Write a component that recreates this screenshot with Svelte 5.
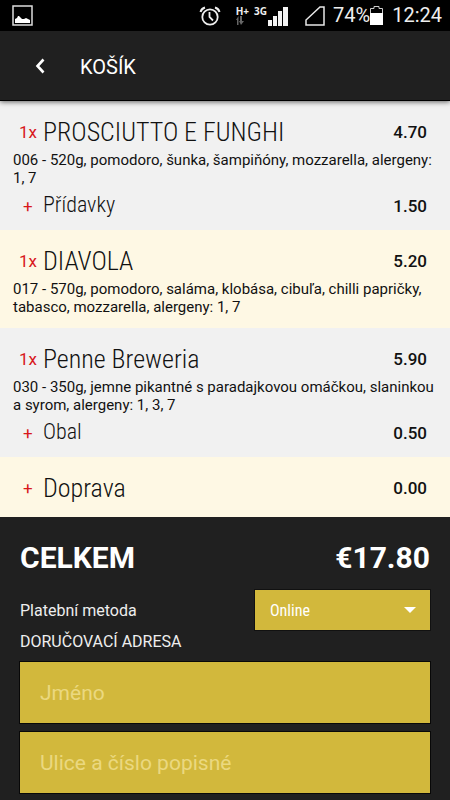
<script lang="ts">
    interface Extra {
        name: string;
        price: string;
    }

    interface Item {
        name: string;
        price: string;
        count?: number;
        description?: string;
        extras?: Extra[];
    }

    const items: Item[] = [
        {
            name: "PROSCIUTTO E FUNGHI",
            price: "4.70",
            count: 1,
            description:
                "006 - 520g, pomodoro, šunka, šampiňóny, mozzarella, alergeny: 1, 7",
            extras: [{ name: "Přídavky", price: "1.50" }],
        },
        {
            name: "DIAVOLA",
            price: "5.20",
            count: 1,
            description:
                "017 - 570g, pomodoro, saláma, klobása, cibuľa, chilli papričky, tabasco, mozzarella, alergeny: 1, 7",
        },
        {
            name: "Penne Breweria",
            price: "5.90",
            count: 1,
            description:
                "030 - 350g, jemne pikantné s paradajkovou omáčkou, slaninkou a syrom, alergeny: 1, 3, 7",
            extras: [{ name: "Obal", price: "0.50" }],
        },
        { name: "Doprava", price: "0.00" },
    ];

    let payment = $state("online");
    let fullName = $state("");
    let street = $state("");
</script>

<div class="screen">
    <div class="status">
        <svg class="picture" width="22" height="22" viewBox="0 0 22 22">
            <rect x="1" y="1" width="19" height="19" fill="none" stroke="#ddd" stroke-width="1.5" />
            <path d="M3 18v-4l2-1 1-2h1l2 2 1 1h2l2-1 2 1 2 1v3z" fill="#fff" />
        </svg>
        <svg class="alarm" width="22" height="22" viewBox="0 0 22 22" fill="none" stroke="#eee" stroke-width="1.8">
            <circle cx="11" cy="12" r="7.700" />
            <path d="M10.500 7v5l3.500 3.500" />
            <path d="M1.500 7q1-3.500 4.500-4.500M20.500 7q-1-3.500-4.500-4.500" stroke-width="2" />
        </svg>
        <div class="network">
            <span>H+</span>
            <svg width="8" height="9" viewBox="0 0 8 9" fill="#666">
                <path d="M0 4l2.500-4v9h-1.500V4zM4 0h2v5h2L5 9 3 5h1z" />
            </svg>
        </div>
        <span class="generation">3G</span>
        <svg class="bars" width="20" height="20" viewBox="0 0 20 20" fill="#f4f4f4">
            <path d="M0 14h4v6H0zM5 10h4v10H5zM10 5h4v15h-4zM15 1h5v19h-5z" />
        </svg>
        <svg class="signal" width="20" height="20" viewBox="0 0 20 20">
            <path d="M1 19v-5L15 1h4v18z" fill="none" stroke="#e8e8e8" stroke-width="1.5" />
        </svg>
        <span class="clock">74%</span>
        <svg width="13" height="19" viewBox="0 0 13 19">
            <path d="M.5 18.500v-16h3.500v-2h5v2h3.500v16z" fill="none" stroke="#ccc" />
            <path d="M0 7h13v12H0z" fill="#fff" />
        </svg>
        <span class="clock time">12:24</span>
    </div>

    <header>
        <button class="back" aria-label="Zpět">
            <svg width="12" height="16" viewBox="0 0 12 16">
                <path d="M9.500 1.500L3.500 8l6 6.500" fill="none" stroke="#fff" stroke-width="2.600" />
            </svg>
        </button>
        <h1>KOŠÍK</h1>
    </header>

    <ul class="items">
        {#each items as item}
            <li class="item">
                <div class="row">
                    {#if item.count}
                        <span class="count">{item.count}x</span>
                    {:else}
                        <span class="count plus">+</span>
                    {/if}
                    <span class="name">{item.name}</span>
                    <span class="price">{item.price}</span>
                </div>
                {#if item.description}
                    <p>{item.description}</p>
                {/if}
                {#each item.extras ?? [] as extra}
                    <div class="row extra">
                        <span class="count plus">+</span>
                        <span class="name">{extra.name}</span>
                        <span class="price">{extra.price}</span>
                    </div>
                {/each}
            </li>
        {/each}
    </ul>

    <form class="checkout">
        <div class="total">
            <span>CELKEM</span>
            <span>€17.80</span>
        </div>
        <div class="payment">
            <label for="payment">Platební metoda</label>
            <div class="select">
                <select id="payment" bind:value={payment}>
                    <option value="online">Online</option>
                </select>
                <svg width="12" height="7" viewBox="0 0 12 7">
                    <path d="M0 0h12L6 6z" fill="#fff" />
                </svg>
            </div>
        </div>
        <h2>DORUČOVACÍ ADRESA</h2>
        <input type="text" placeholder="Jméno" aria-label="Jméno" bind:value={fullName} />
        <input
            type="text"
            placeholder="Ulice a číslo popisné"
            aria-label="Ulice a číslo popisné"
            bind:value={street} />
    </form>
</div>

<style>
    :global(body) {
        background: #202020;
    }

    .screen {
        font-family: Roboto, "Liberation Sans", sans-serif;
        color: #111;
    }

    .status {
        display: flex;
        align-items: center;
        height: 31px;
        padding: 0 8px 0 12px;
        background: #000;
        color: #eee;
    }

    .alarm {
        margin-left: auto;
        margin-right: 15px;
    }

    .network {
        display: flex;
        flex-direction: column;
        font: bold 10px/10px "Noto Sans", sans-serif;
    }

    .generation {
        align-self: flex-start;
        margin: 6px 1px 0 5px;
        font: bold 10px/10px "Noto Sans", sans-serif;
    }

    .signal {
        margin: 0 8px 0 17px;
    }

    .clock {
        font-size: 20px;
        line-height: 31px;
    }

    .time {
        margin-left: 9px;
    }

    header {
        position: relative;
        display: flex;
        align-items: center;
        box-sizing: border-box;
        height: 70px;
        border-bottom: 1px solid #000;
        background: #202020;
        color: #fff;
        box-shadow: 0 1px 5px rgba(0, 0, 0, 0.6);
    }

    .back {
        display: flex;
        justify-content: center;
        width: 80px;
        padding: 12px 0;
        border: none;
        background: none;
        cursor: pointer;
    }

    h1 {
        margin: 2px 0 0;
        font-size: 20px;
        font-weight: 400;
    }

    .items {
        margin: 0;
        padding: 0;
        list-style: none;
    }

    .item {
        box-sizing: border-box;
        min-height: 60px;
        padding: 15px 12px 9px;
        background: #f1f1f1;
    }

    .item:nth-child(even) {
        background: #fef8e4;
    }

    .row {
        display: flex;
        align-items: center;
        height: 32px;
        padding-right: 11px;
    }

    .extra {
        height: 31px;
    }

    .count {
        width: 31px;
        box-sizing: border-box;
        padding-left: 7px;
        color: #d8181c;
        font-size: 17px;
    }

    .plus {
        padding-left: 11px;
    }

    .name {
        flex: 1;
        font-family: "Roboto Condensed", Roboto, sans-serif;
        font-size: 26px;
        font-weight: 300;
        line-height: 32px;
    }

    .extra .name {
        font-size: 22px;
        line-height: 31px;
        padding-bottom: 3px;
    }

    .price {
        font-size: 17px;
        font-weight: 500;
    }

    p {
        margin: 3px 0;
        padding-left: 1px;
        font-size: 15px;
        line-height: 18px;
    }

    .checkout {
        display: flex;
        flex-direction: column;
        padding: 20px 20px 8px;
        background: #202020;
        color: #eee;
    }

    .total {
        display: flex;
        justify-content: space-between;
        color: #fff;
        font-size: 30px;
        font-weight: 700;
        line-height: 42px;
    }

    .payment {
        display: flex;
        align-items: center;
        justify-content: space-between;
        margin-top: 11px;
        font-size: 16px;
    }

    .select {
        position: relative;
        width: 175px;
    }

    .select svg {
        position: absolute;
        right: 14px;
        top: 17px;
        pointer-events: none;
    }

    select {
        display: block;
        width: 100%;
        height: 40px;
        padding: 0 15px;
        border: none;
        border-radius: 0;
        appearance: none;
        background: #d2b83c;
        box-shadow: 0 0 0 1px #111;
        color: #fff;
        font-family: "Roboto Condensed", Roboto, sans-serif;
        font-size: 16px;
    }

    h2 {
        margin: 2px 0 10px;
        font-size: 16px;
        font-weight: 400;
        line-height: 20px;
    }

    input {
        box-sizing: border-box;
        width: 100%;
        height: 61px;
        margin-bottom: 9px;
        padding: 0 20px;
        border: none;
        border-radius: 0;
        background: #d2b83c;
        box-shadow: 0 0 0 1px #080808;
        color: #fff;
        font-family: inherit;
        font-size: 21px;
    }

    input::placeholder {
        color: #ebd880;
        opacity: 1;
    }
</style>
